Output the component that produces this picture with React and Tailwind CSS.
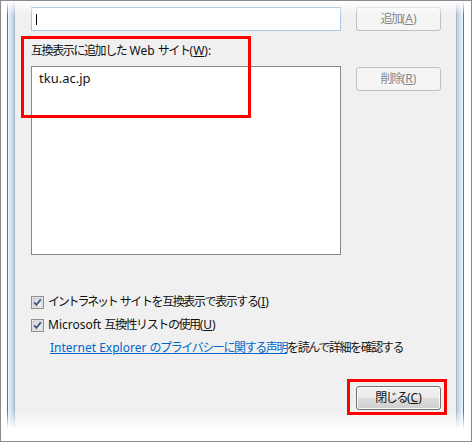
import React from "react";

// Japanese runs are set a bit tighter, closer to Meiryo UI widths
function J({ children, tight }) {
  return <span className={tight ? "tracking-[-2.2px]" : "tracking-[-1.4px]"}>{children}</span>;
}

function Checkbox() {
  return (
    <svg width="13" height="13" viewBox="0 0 13 13" className="shrink-0">
      <defs>
        <linearGradient id="cbg" x1="0" y1="0" x2="1" y2="1">
          <stop offset="0" stopColor="#d6d6d6" />
          <stop offset="1" stopColor="#f8f8f8" />
        </linearGradient>
      </defs>
      <rect x="0.5" y="0.5" width="12" height="12" fill="#f4f4f4" stroke="#8e8f8f" />
      <rect x="2" y="2" width="9" height="9" fill="url(#cbg)" stroke="#b5b5b5" strokeWidth="0.6" />
      <path d="M3.2 6.4 L5.4 8.8 L9.8 3.4" fill="none" stroke="#3c568a" strokeWidth="1.8" />
    </svg>
  );
}

function DisabledButton({ children, className = "" }) {
  return (
    <div
      className={
        "flex h-[24px] w-[85px] shrink-0 items-center justify-center rounded-[3px] border border-[#bcc0c3] bg-[#f5f5f5] text-[#878787] " +
        className
      }
    >
      {children}
    </div>
  );
}

export default function App() {
  return (
    <div className="relative h-[442px] w-[472px] overflow-hidden border border-[#8a8a8a] bg-white font-['Noto_Sans','Noto_Sans_CJK_JP',sans-serif] text-[12px] leading-4 text-[#111]">
      <div className="ml-[6px] flex h-[427px] w-[457px] border-x border-[#707070]">
        <div className="w-[6px] bg-[linear-gradient(to_right,#eef5fc,#b6d0ec)]" />
        <div className="w-px bg-[#a9b6c4]" />
        <div className="flex flex-1 flex-col bg-[#f0f0f0] pl-[16px] pr-[15px] pt-[6px]">
          <div className="flex gap-[15px]">
            <div className="relative h-[24px] w-[310px] border border-[#a9c6e2] border-t-[#5f8fbd] bg-white">
              <div className="absolute left-[4px] top-[6px] h-[11px] w-px bg-black" />
            </div>
            <DisabledButton>
              <J>追加</J>(<u>A</u>)
            </DisabledButton>
          </div>

          <div className="mt-[12px] h-4">
            <J>互換表示に追加した</J> Web <J>サイト</J>(<u>W</u>):
          </div>

          <div className="mt-[7px] flex gap-[15px]">
            <div className="h-[189px] w-[310px] border border-[#828790] bg-white pl-[7px] pt-[3px] text-[13px]">
              tku.ac.jp
            </div>
            <DisabledButton className="mt-px">
              <J>削除</J>(<u>R</u>)
            </DisabledButton>
          </div>

          <div className="mt-[39px] flex h-4 items-center gap-[4px]">
            <Checkbox />
            <span>
              <J tight>イントラネット</J> <J>サイトを互換表示で表示する</J>(<u>I</u>)
            </span>
          </div>
          <div className="mt-[7px] flex h-4 items-center gap-[4px]">
            <Checkbox />
            <span>
              Microsoft <J>互換性リストの使用</J>(<u>U</u>)
            </span>
          </div>
          <div className="mt-[7px] h-4 pl-[19px]">
            <span className="text-[#0066cc] underline">
              Internet Explorer <J>のプライバシーに関する声明</J>
            </span>
            <J>を読んで詳細を確認する</J>
          </div>

          <div className="mt-[30px] flex justify-end">
            <div className="flex h-[24px] w-[85px] items-center justify-center rounded-[3px] border border-[#707070] bg-[linear-gradient(to_bottom,#f2f2f2_0%,#ebebeb_50%,#dddddd_50%,#cfcfcf_100%)] shadow-[inset_0_0_0_1px_#fbfbfb]">
              <J>閉じる</J>(<u>C</u>)
            </div>
          </div>
        </div>
        <div className="w-px bg-[#a9b6c4]" />
        <div className="w-[6px] bg-[linear-gradient(to_left,#eef5fc,#b6d0ec)]" />
      </div>

      {/* faded edges of the cropped screenshot */}
      <div className="pointer-events-none absolute inset-x-0 top-0 h-[14px] bg-gradient-to-b from-white to-transparent" />
      <div className="pointer-events-none absolute inset-x-0 top-[410px] h-[18px] bg-gradient-to-b from-transparent to-white" />

      {/* red annotation boxes */}
      <div className="pointer-events-none absolute left-[20px] top-[35px] h-[82px] w-[230px] border-[3px] border-[#ff0000]" />
      <div className="pointer-events-none absolute left-[346px] top-[378px] h-[36px] w-[100px] border-[3px] border-[#ff0000]" />
    </div>
  );
}
